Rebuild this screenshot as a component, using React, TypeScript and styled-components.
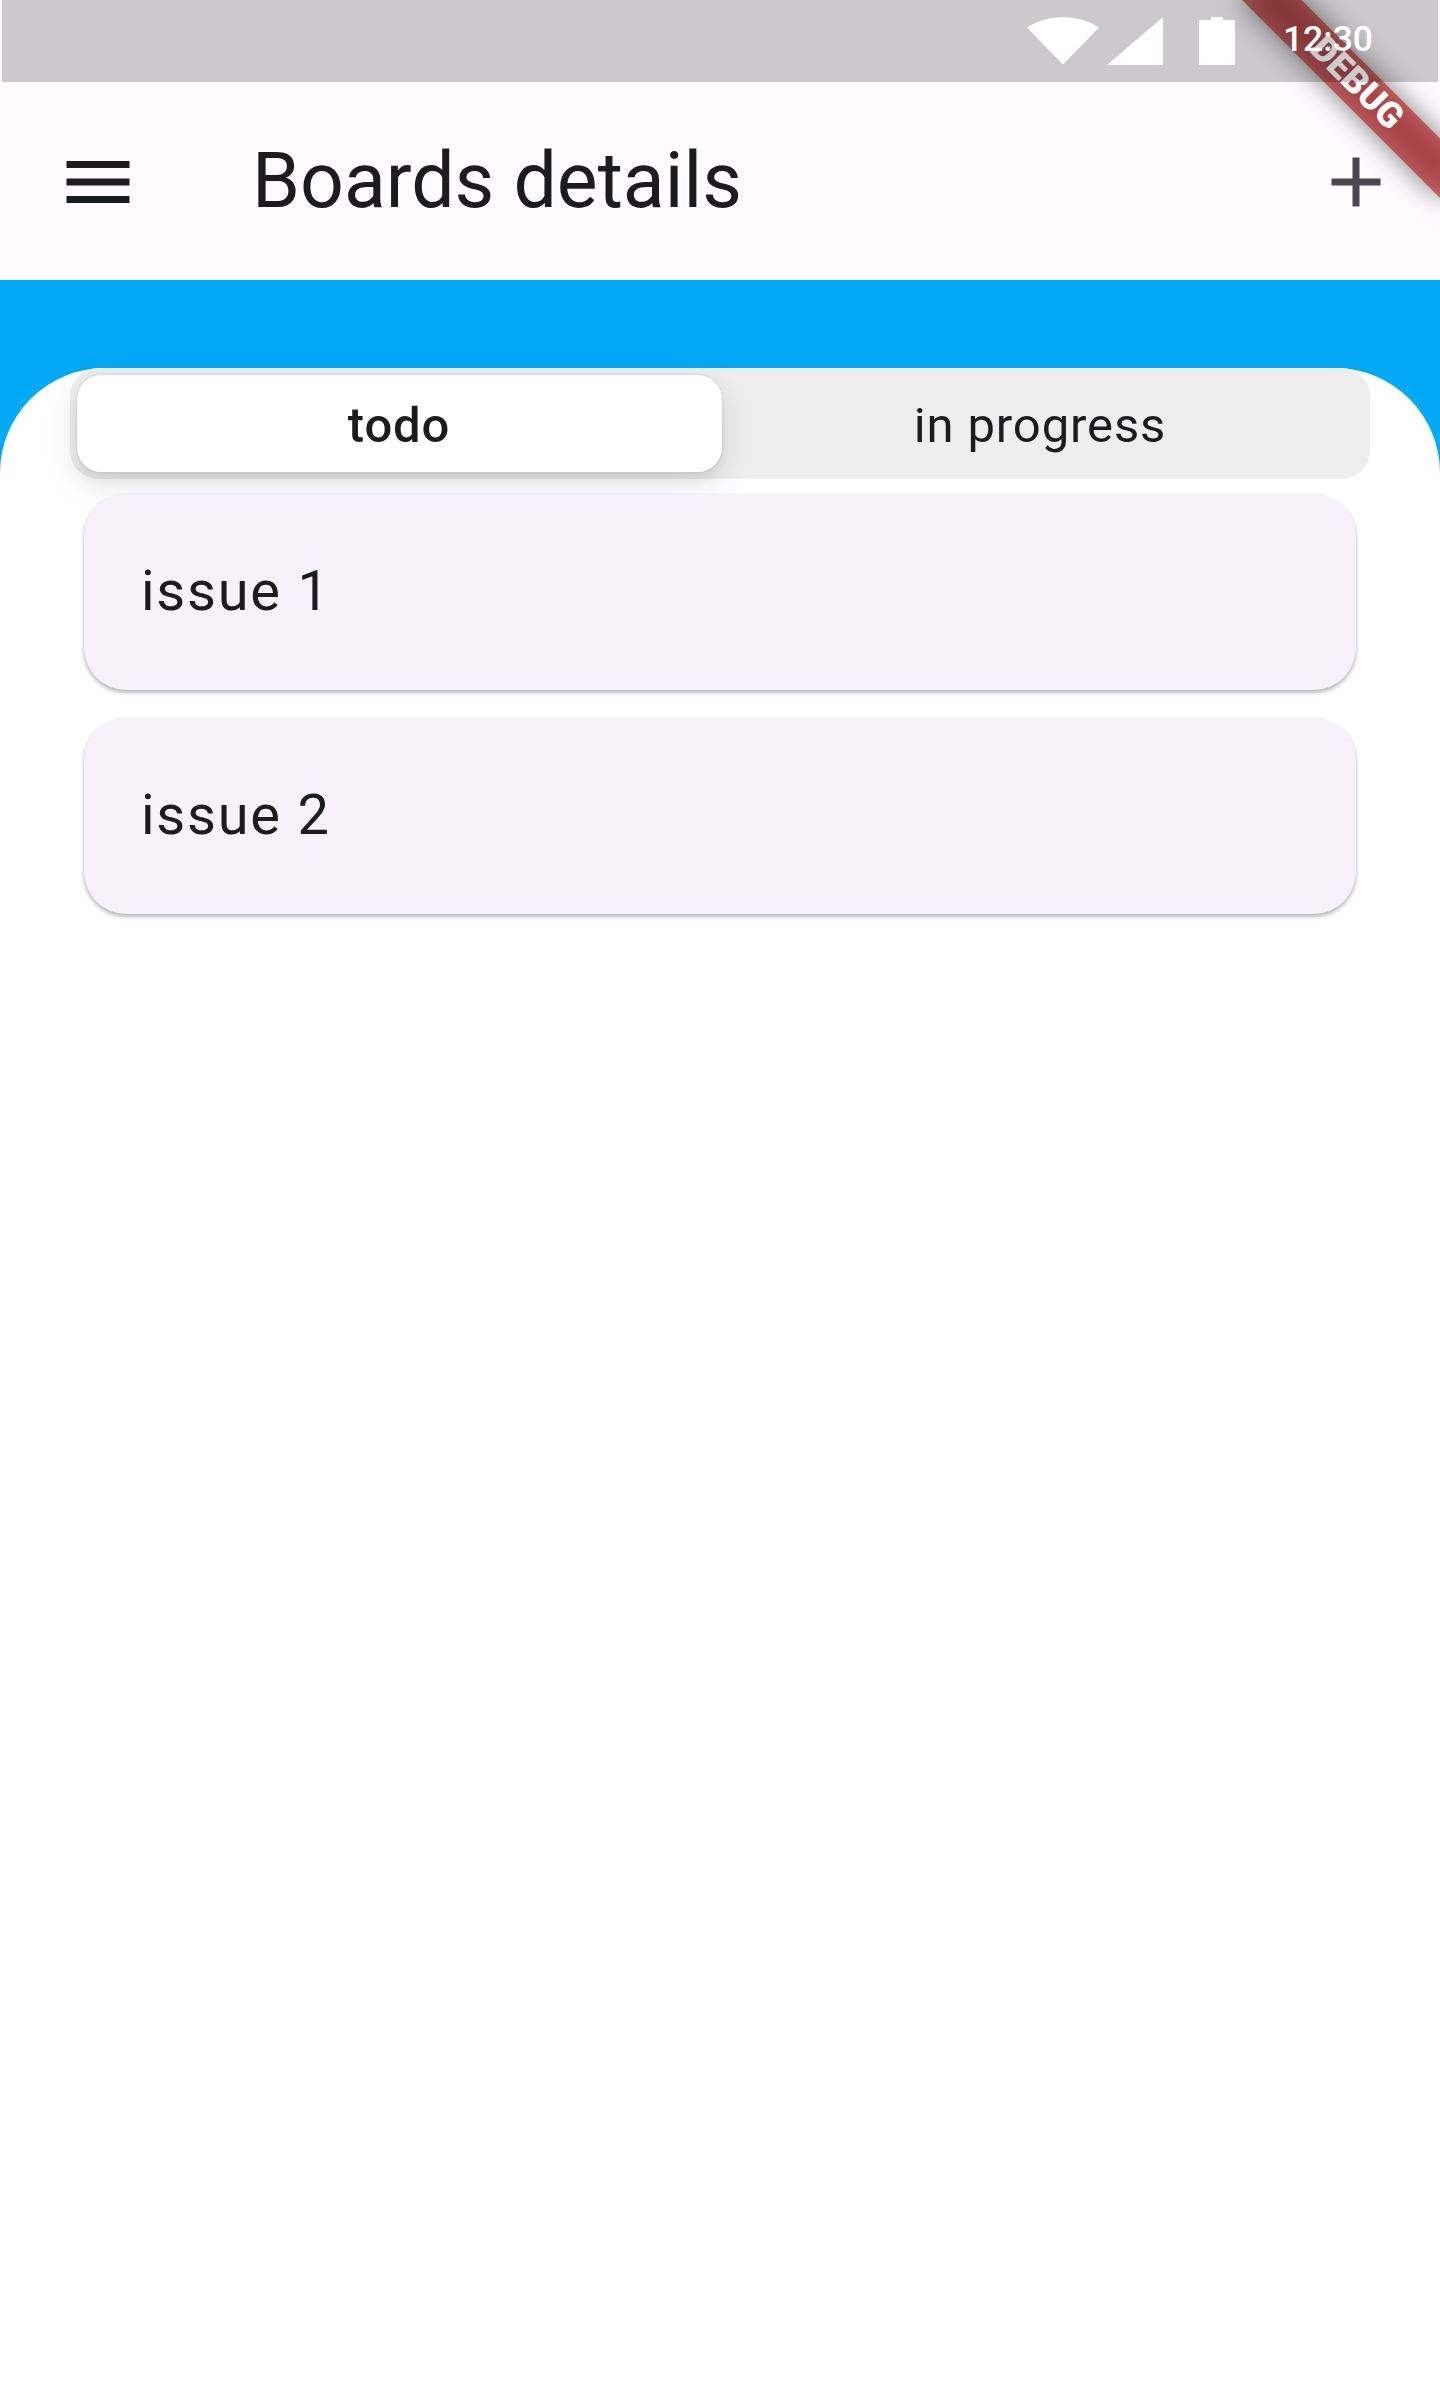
import React, { useState } from 'react';
import styled, { createGlobalStyle } from 'styled-components';

const GlobalStyle = createGlobalStyle`
  * { box-sizing: border-box; }
  body {
    margin: 0;
    background: #ffffff;
    font-family: Roboto, "Noto Sans", sans-serif;
    color: #1c1b1e;
  }
`;

const Screen = styled.div`
  position: relative;
  display: flex;
  flex-direction: column;
  width: 1440px;
  height: 2392px;
  overflow: hidden;
  background: #03a9f4;
`;

const AppBar = styled.header`
  display: flex;
  align-items: center;
  height: 280px;
  padding: 84px 42px 0 56px;
  background: #fffbff;
`;

const IconButton = styled.button`
  display: flex;
  padding: 0;
  border: 0;
  background: none;
  color: ${(p) => p.color};
`;

const Title = styled.h1`
  flex: 1;
  margin: 0 0 2px 112px;
  font-size: 77px;
  font-weight: 400;
  line-height: 98px;
`;

const Sheet = styled.main`
  flex: 1;
  margin-top: 88px;
  border-radius: 105px 105px 0 0;
  background: #ffffff;
  padding: 0 70px;
`;

const Segments = styled.div`
  display: grid;
  grid-template-columns: 645px 1fr;
  height: 111px;
  padding: 7px 12px 7px 7px;
  border-radius: 28px;
  background: #eeeeee;
`;

const Segment = styled.button<{ $active: boolean }>`
  border: 0;
  padding: ${(p) => (p.$active ? '5px 1px 0 0' : '5px 0 0')};
  border-radius: 24.5px;
  font-family: inherit;
  font-size: 49px;
  line-height: 90px;
  letter-spacing: 0.875px;
  color: inherit;
  font-weight: ${(p) => (p.$active ? 500 : 400)};
  background: ${(p) => (p.$active ? '#ffffff' : 'transparent')};
  box-shadow: ${(p) =>
    p.$active
      ? '0 0 0 1.75px rgba(0,0,0,.04), 0 10.5px 35.8px rgba(0,0,0,.12), 0 10.5px 7.5px rgba(0,0,0,.04)'
      : 'none'};
`;

const IssueList = styled.ul`
  position: relative;
  display: flex;
  flex-direction: column;
  gap: 28px;
  margin: 0;
  padding: 15px 14px 14px;
  list-style: none;
`;

const IssueCard = styled.li`
  display: flex;
  align-items: center;
  height: 196px;
  padding: 0 56px 2px 57px;
  border-radius: 42px;
  background: #f6f1fb;
  font-size: 56px;
  letter-spacing: 1.75px;
  box-shadow: 0 3px 4px rgba(0, 0, 0, 0.24), 0 1px 3px rgba(0, 0, 0, 0.1);
`;

const Ribbon = styled.div`
  position: absolute;
  top: 0;
  left: 1440px;
  width: 0;
  height: 0;
  transform: rotate(45deg);
  transform-origin: 0 0;
`;

const RibbonShadow = styled.div`
  position: absolute;
  left: -140px;
  top: 98px;
  width: 280px;
  height: 42px;
  background: rgba(0, 0, 0, 0.5);
  filter: blur(13.9px);
`;

const RibbonBand = styled.div`
  position: absolute;
  left: -140px;
  top: 98px;
  width: 280px;
  height: 42px;
  background: rgba(183, 28, 28, 0.627);
  color: #ffffff;
  text-align: center;
  font-size: 35.7px;
  font-weight: 900;
  line-height: 39px;
`;

const StatusBar = styled.div`
  position: absolute;
  top: 0;
  left: 2px;
  right: 2px;
  height: 82px;
  display: flex;
  justify-content: flex-end;
  padding-right: 65px;
  background: rgba(0, 0, 0, 0.2);
  color: #ffffff;
`;

const Clock = styled.span`
  margin-left: 46px;
  font-size: 35.5px;
  font-weight: 500;
  line-height: 78px;
`;

function MenuIcon() {
  return (
    <svg width="84" height="84" viewBox="0 0 24 24" fill="currentColor">
      <path d="M3 18h18v-2H3v2zm0-5h18v-2H3v2zm0-7v2h18V6H3z" />
    </svg>
  );
}

function AddIcon() {
  return (
    <svg width="84" height="84" viewBox="0 0 24 24" fill="currentColor">
      <path d="M19 13h-6v6h-2v-6H5v-2h6V5h2v6h6v2z" />
    </svg>
  );
}

function StatusIcons() {
  return (
    <svg width="210" height="82" viewBox="0 0 210 82" fill="currentColor">
      <path d="M0 27.5Q16 17 36 17t36 10.500L36 64.500z" />
      <path d="M136 17v48H80z" />
      <path d="M172 20h12v-3h12v3h12v45h-36z" />
    </svg>
  );
}

const tabs = [
  { name: 'todo', issues: ['issue 1', 'issue 2'] },
  { name: 'in progress', issues: [] as string[] },
];

export default function App() {
  const [active, setActive] = useState(0);
  return (
    <>
      <GlobalStyle />
      <Screen>
        <AppBar>
          <IconButton color="#1c1b1e" aria-label="Menu">
            <MenuIcon />
          </IconButton>
          <Title>Boards details</Title>
          <IconButton color="#48464f" aria-label="Add">
            <AddIcon />
          </IconButton>
        </AppBar>
        <Sheet>
          <Segments>
            {tabs.map((tab, i) => (
              <Segment key={tab.name} $active={i === active} onClick={() => setActive(i)}>
                {tab.name}
              </Segment>
            ))}
          </Segments>
          <IssueList>
            {tabs[active].issues.map((issue) => (
              <IssueCard key={issue}>{issue}</IssueCard>
            ))}
          </IssueList>
        </Sheet>
        <Ribbon>
          <RibbonShadow />
          <RibbonBand>DEBUG</RibbonBand>
        </Ribbon>
        <StatusBar>
          <StatusIcons />
          <Clock>12:30</Clock>
        </StatusBar>
      </Screen>
    </>
  );
}
